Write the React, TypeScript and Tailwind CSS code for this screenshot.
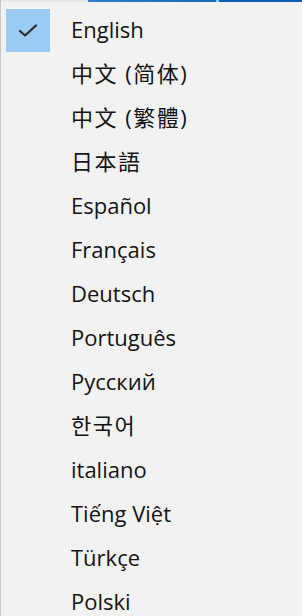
import React from 'react';

const languages = [
  { label: 'English' },
  { label: '中文 (简体)', cjk: true },
  { label: '中文 (繁體)', cjk: true },
  { label: '日本語', cjk: true },
  { label: 'Español' },
  { label: 'Français' },
  { label: 'Deutsch' },
  { label: 'Português' },
  { label: 'Русский' },
  { label: '한국어', cjk: true },
  { label: 'italiano' },
  { label: 'Tiếng Việt' },
  { label: 'Türkçe' },
  { label: 'Polski' },
];

export default function App() {
  const selected = 'English';

  return (
    <div className="h-[616px] w-[302px] overflow-hidden bg-[#f2f2f2] border-l border-[#c8c8c8]">
      {/* strip of the window above the menu */}
      <div className="flex h-[2px]">
        <div className="w-[87px] bg-[#e6e6e6]" />
        <div className="w-[128px] bg-gradient-to-r from-[#2a7dd1] to-[#1668c0]" />
        <div className="w-[3px] bg-[#7fd0f5]" />
        <div className="flex-1 bg-[#0b5cb5]" />
      </div>
      <ul
        className="pt-[6px] text-[#141414]"
        style={{ fontFamily: '"Open Sans", "Noto Sans", "Noto Sans CJK SC", "Noto Sans CJK KR", sans-serif' }}
      >
        {languages.map((lang) => (
          <li key={lang.label} className="flex h-[44px] items-center">
            <div className="ml-[5px] flex h-[43px] w-[44px] items-center justify-center">
              {lang.label === selected && (
                <div className="flex h-full w-full items-center justify-center bg-[#99cbf5]">
                  <svg width="20" height="15" viewBox="0 0 20 15" fill="none">
                    <path d="M2 8 L7 12.5 L18 2.5" stroke="#2b2b2b" strokeWidth="2.2" strokeLinecap="round" strokeLinejoin="round" />
                  </svg>
                </div>
              )}
            </div>
            <span
              className={`ml-[21px] mb-[2px] text-[22px] leading-none ${lang.cjk ? 'tracking-[1.5px]' : ''}`}
            >
              {lang.label}
            </span>
          </li>
        ))}
      </ul>
    </div>
  );
}
